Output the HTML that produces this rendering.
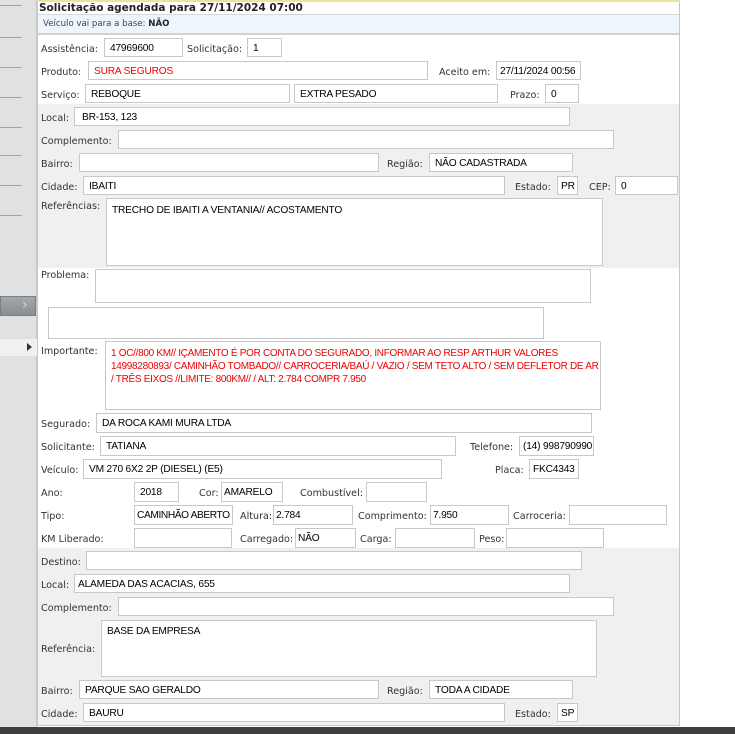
<!DOCTYPE html>
<html><head><meta charset="utf-8"><style>
*{margin:0;padding:0;box-sizing:border-box}
body{width:735px;height:734px;position:relative;overflow:hidden;background:#fff;font-family:"DejaVu Sans","Liberation Sans",sans-serif;font-size:10px;color:#333}
.a{position:absolute}
.l{position:absolute;white-space:nowrap;color:#333;font-size:9.6px;margin-top:2px}
.i{position:absolute;background:#fff;border:1px solid #c8c8c8;font-family:"Liberation Sans",sans-serif;font-size:10.2px;letter-spacing:-0.2px;color:#000;padding:3px 0 0 5px;white-space:nowrap;overflow:hidden;line-height:13px}
.r{color:#e00}
.sl{position:absolute;left:0;width:22px;height:1px;background:#a0a3a5}
</style></head><body>
<div class="a" style="left:0;top:0;width:37px;height:728px;background:#dfe1e2;border-right:1px solid #c4c6c8"></div>
<div class="sl" style="top:5px"></div><div class="sl" style="top:37px"></div><div class="sl" style="top:67px"></div><div class="sl" style="top:97px"></div><div class="sl" style="top:127px"></div><div class="sl" style="top:155px"></div><div class="sl" style="top:185px"></div><div class="sl" style="top:215px"></div>
<div class="a" style="left:0;top:296px;width:36px;height:20px;background:linear-gradient(#a4a8ab,#8a8e92);border:1px solid #7c8084"></div>
<div class="a" style="left:22px;top:297px;color:#d8dadc;font-size:14px">›</div>
<div class="a" style="left:0;top:339px;width:37px;height:17px;background:#f0f1f2"></div>
<div class="a" style="left:27px;top:343px;width:0;height:0;border-left:5px solid #333;border-top:4px solid transparent;border-bottom:4px solid transparent"></div>
<div class="a" style="left:37px;top:0;width:643px;height:726px;border:1px solid #c8c8c8;border-top:none"></div>
<div class="a" style="left:37px;top:0;width:643px;height:2px;background:#eee2a0"></div>
<div class="a" style="left:39px;top:2px;font-weight:bold;font-size:10.5px;color:#222">Solicitação agendada para 27/11/2024 07:00</div>
<div class="a" style="left:38px;top:14px;width:641px;height:21px;background:#eef5fc;border-top:1px solid #d4d8dc;border-bottom:2px solid #cfd3d6"></div>
<div class="a" style="left:43px;top:19px;font-size:8.6px;color:#444">Veículo vai para a base: <b style="color:#222">NÃO</b></div>
<div class="a" style="left:38px;top:104px;width:641px;height:164px;background:#f0f0f0"></div>
<div class="a" style="left:38px;top:548px;width:641px;height:177px;background:#f0f0f0"></div>
<div class="a" style="left:0;top:727px;width:735px;height:7px;background:#3f3f3f"></div>

<div class="l" style="left:41px;top:42px">Assistência:</div><div class="i" style="left:104px;top:38px;width:79px;height:19px">47969600</div>
<div class="l" style="left:187px;top:42px">Solicitação:</div><div class="i" style="left:247px;top:38px;width:35px;height:19px">1</div>

<div class="l" style="left:41px;top:65px">Produto:</div><div class="i r" style="left:88px;top:61px;width:340px;height:19px">SURA SEGUROS</div>
<div class="l" style="left:439px;top:65px">Aceito em:</div><div class="i" style="left:496px;top:61px;width:85px;height:19px;padding-left:3px">27/11/2024 00:56</div>

<div class="l" style="left:41px;top:88px">Serviço:</div><div class="i" style="left:85px;top:84px;width:205px;height:19px">REBOQUE</div>
<div class="i" style="left:294px;top:84px;width:204px;height:19px">EXTRA PESADO</div>
<div class="l" style="left:510px;top:88px">Prazo:</div><div class="i" style="left:545px;top:84px;width:34px;height:19px">0</div>

<div class="l" style="left:41px;top:111px">Local:</div><div class="i" style="left:74px;top:107px;width:496px;height:19px;padding-left:7px">BR-153, 123</div>
<div class="l" style="left:41px;top:134px">Complemento:</div><div class="i" style="left:118px;top:130px;width:496px;height:19px"></div>
<div class="l" style="left:41px;top:157px">Bairro:</div><div class="i" style="left:79px;top:153px;width:300px;height:19px"></div>
<div class="l" style="left:387px;top:157px">Região:</div><div class="i" style="left:429px;top:153px;width:144px;height:19px">NÃO CADASTRADA</div>
<div class="l" style="left:41px;top:180px">Cidade:</div><div class="i" style="left:83px;top:176px;width:422px;height:19px">IBAITI</div>
<div class="l" style="left:515px;top:180px">Estado:</div><div class="i" style="left:557px;top:176px;width:21px;height:19px;padding-left:3px">PR</div>
<div class="l" style="left:589px;top:180px">CEP:</div><div class="i" style="left:615px;top:176px;width:63px;height:19px">0</div>
<div class="l" style="left:41px;top:199px">Referências:</div><div class="i" style="left:106px;top:198px;width:497px;height:68px;padding-top:5px">TRECHO DE IBAITI A VENTANIA// ACOSTAMENTO</div>

<div class="l" style="left:41px;top:268px">Problema:</div><div class="i" style="left:95px;top:269px;width:496px;height:34px"></div>
<div class="i" style="left:48px;top:307px;width:496px;height:32px"></div>
<div class="l" style="left:41px;top:344px">Importante:</div><div class="i r" style="left:105px;top:341px;width:496px;height:69px;white-space:normal;font-size:10px;letter-spacing:-0.3px;line-height:13px;padding-top:5px">1 OC//800 KM// IÇAMENTO É POR CONTA DO SEGURADO, INFORMAR AO RESP ARTHUR VALORES 14998280893/ CAMINHÃO TOMBADO// CARROCERIA/BAÚ / VAZIO / SEM TETO ALTO / SEM DEFLETOR DE AR / TRÊS EIXOS //LIMITE: 800KM// / ALT: 2.784 COMPR 7.950</div>

<div class="l" style="left:41px;top:417px">Segurado:</div><div class="i" style="left:96px;top:413px;width:496px;height:20px">DA ROCA KAMI MURA LTDA</div>
<div class="l" style="left:41px;top:440px">Solicitante:</div><div class="i" style="left:100px;top:436px;width:356px;height:20px">TATIANA</div>
<div class="l" style="left:470px;top:440px">Telefone:</div><div class="i" style="left:519px;top:436px;width:75px;height:20px;padding-left:3px">(14) 998790990</div>
<div class="l" style="left:41px;top:463px">Veículo:</div><div class="i" style="left:83px;top:459px;width:359px;height:20px">VM 270 6X2 2P (DIESEL) (E5)</div>
<div class="l" style="left:495px;top:463px">Placa:</div><div class="i" style="left:529px;top:459px;width:50px;height:20px;padding-left:3px">FKC4343</div>
<div class="l" style="left:41px;top:486px">Ano:</div><div class="i" style="left:134px;top:482px;width:45px;height:20px">2018</div>
<div class="l" style="left:199px;top:486px">Cor:</div><div class="i" style="left:221px;top:482px;width:62px;height:20px;padding-left:2px">AMARELO</div>
<div class="l" style="left:300px;top:486px">Combustível:</div><div class="i" style="left:366px;top:482px;width:61px;height:20px"></div>
<div class="l" style="left:41px;top:509px">Tipo:</div><div class="i" style="left:134px;top:505px;width:99px;height:20px;padding-left:2px;letter-spacing:-0.4px">CAMINHÃO ABERTO</div>
<div class="l" style="left:240px;top:509px">Altura:</div><div class="i" style="left:273px;top:505px;width:80px;height:20px;padding-left:2px">2.784</div>
<div class="l" style="left:358px;top:509px">Comprimento:</div><div class="i" style="left:430px;top:505px;width:79px;height:20px;padding-left:2px">7.950</div>
<div class="l" style="left:513px;top:509px">Carroceria:</div><div class="i" style="left:569px;top:505px;width:98px;height:20px"></div>
<div class="l" style="left:41px;top:532px">KM Liberado:</div><div class="i" style="left:134px;top:528px;width:98px;height:20px"></div>
<div class="l" style="left:240px;top:532px">Carregado:</div><div class="i" style="left:295px;top:528px;width:61px;height:20px;padding-left:2px">NÃO</div>
<div class="l" style="left:360px;top:532px">Carga:</div><div class="i" style="left:395px;top:528px;width:80px;height:20px"></div>
<div class="l" style="left:479px;top:532px">Peso:</div><div class="i" style="left:506px;top:528px;width:98px;height:20px"></div>

<div class="l" style="left:41px;top:555px">Destino:</div><div class="i" style="left:86px;top:551px;width:496px;height:19px"></div>
<div class="l" style="left:41px;top:578px">Local:</div><div class="i" style="left:74px;top:574px;width:496px;height:19px;padding-left:3px">ALAMEDA DAS ACACIAS, 655</div>
<div class="l" style="left:41px;top:601px">Complemento:</div><div class="i" style="left:118px;top:597px;width:496px;height:19px"></div>
<div class="l" style="left:41px;top:642px">Referência:</div><div class="i" style="left:101px;top:620px;width:496px;height:57px;padding-top:4px">BASE DA EMPRESA</div>
<div class="l" style="left:41px;top:684px">Bairro:</div><div class="i" style="left:79px;top:680px;width:300px;height:19px">PARQUE SAO GERALDO</div>
<div class="l" style="left:387px;top:684px">Região:</div><div class="i" style="left:429px;top:680px;width:144px;height:19px">TODA A CIDADE</div>
<div class="l" style="left:41px;top:707px">Cidade:</div><div class="i" style="left:83px;top:703px;width:422px;height:19px">BAURU</div>
<div class="l" style="left:515px;top:707px">Estado:</div><div class="i" style="left:557px;top:703px;width:21px;height:19px;padding-left:3px">SP</div>
</body></html>
